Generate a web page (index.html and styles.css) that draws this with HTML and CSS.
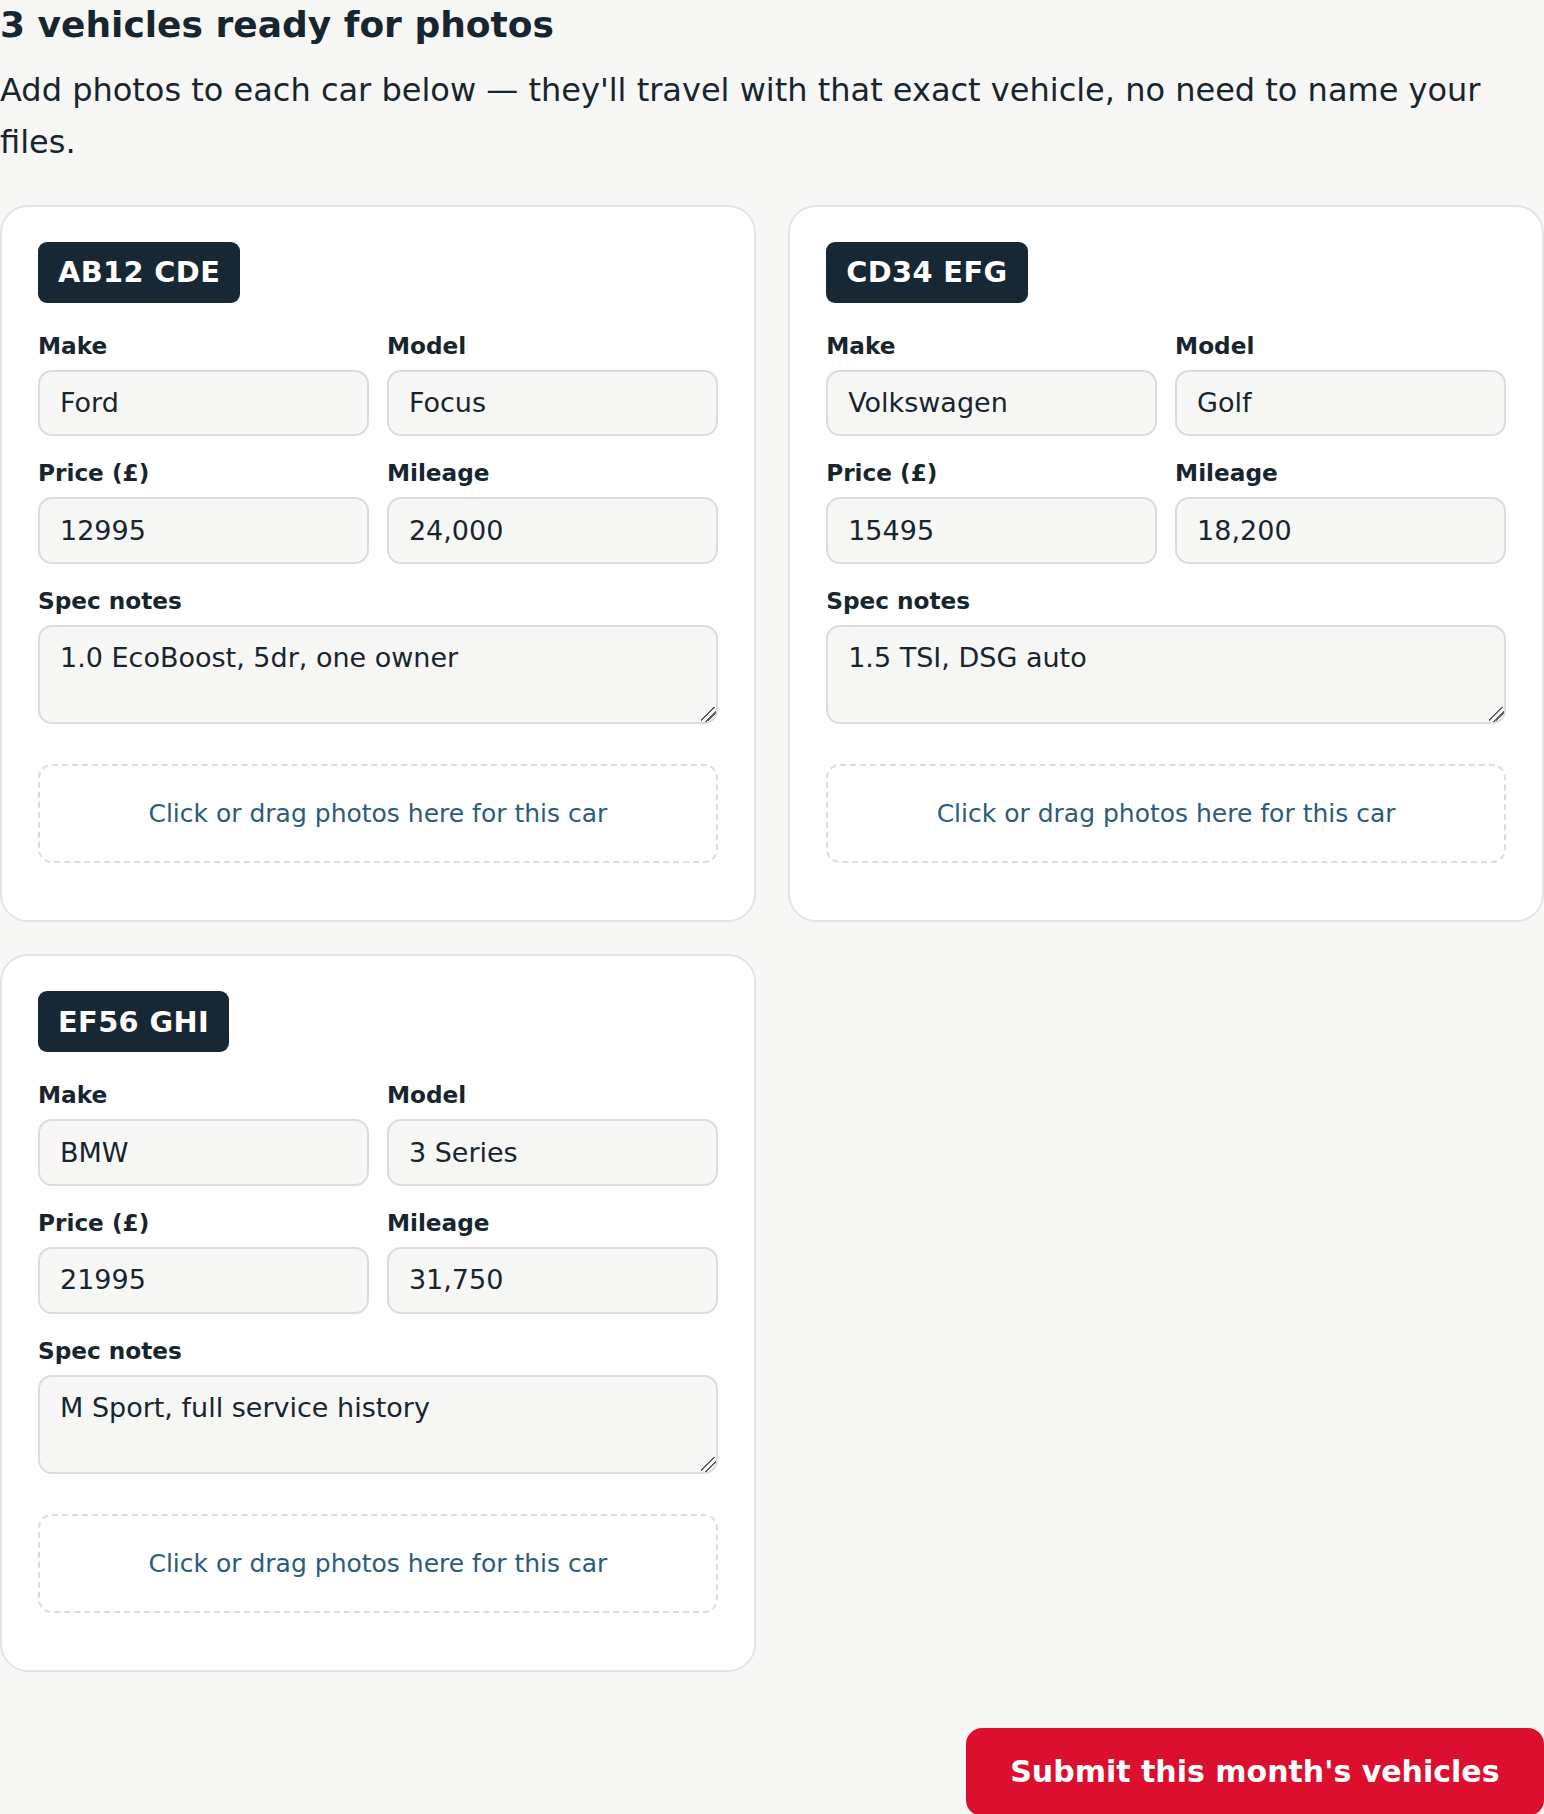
FILE: index.html
```html
<!DOCTYPE html>
<html lang="en">
<head>
<meta charset="utf-8">
<title>Vehicles ready for photos</title>
<link rel="stylesheet" href="styles.css">
</head>
<body>
<main class="page">
  <h1 class="title">3 vehicles ready for photos</h1>
  <p class="intro">Add photos to each car below — they'll travel with that exact vehicle, no need to name your files.</p>

  <div class="cards">
    <section class="card">
      <div class="plate">AB12 CDE</div>
      <div class="fields">
        <div class="field"><label class="label">Make</label><input class="input" type="text" value="Ford"></div>
        <div class="field"><label class="label">Model</label><input class="input" type="text" value="Focus"></div>
        <div class="field"><label class="label">Price (£)</label><input class="input" type="text" value="12995"></div>
        <div class="field"><label class="label">Mileage</label><input class="input" type="text" value="24,000"></div>
        <div class="field field-wide"><label class="label">Spec notes</label><textarea class="textarea">1.0 EcoBoost, 5dr, one owner</textarea></div>
      </div>
      <div class="dropzone">Click or drag photos here for this car</div>
    </section>

    <section class="card">
      <div class="plate">CD34 EFG</div>
      <div class="fields">
        <div class="field"><label class="label">Make</label><input class="input" type="text" value="Volkswagen"></div>
        <div class="field"><label class="label">Model</label><input class="input" type="text" value="Golf"></div>
        <div class="field"><label class="label">Price (£)</label><input class="input" type="text" value="15495"></div>
        <div class="field"><label class="label">Mileage</label><input class="input" type="text" value="18,200"></div>
        <div class="field field-wide"><label class="label">Spec notes</label><textarea class="textarea">1.5 TSI, DSG auto</textarea></div>
      </div>
      <div class="dropzone">Click or drag photos here for this car</div>
    </section>

    <section class="card">
      <div class="plate">EF56 GHI</div>
      <div class="fields">
        <div class="field"><label class="label">Make</label><input class="input" type="text" value="BMW"></div>
        <div class="field"><label class="label">Model</label><input class="input" type="text" value="3 Series"></div>
        <div class="field"><label class="label">Price (£)</label><input class="input" type="text" value="21995"></div>
        <div class="field"><label class="label">Mileage</label><input class="input" type="text" value="31,750"></div>
        <div class="field field-wide"><label class="label">Spec notes</label><textarea class="textarea">M Sport, full service history</textarea></div>
      </div>
      <div class="dropzone">Click or drag photos here for this car</div>
    </section>
  </div>

  <div class="actions">
    <button class="submit" type="button">Submit this month's vehicles</button>
  </div>
</main>
</body>
</html>
```

FILE: styles.css
```css
* {
  box-sizing: border-box;
}

html, body {
  margin: 0;
  padding: 0;
  background: #f7f7f5;
}

body {
  font-family: "DejaVu Sans", "Noto Sans", sans-serif;
  color: #17252f;
}

.page {
  width: 1544px;
}

.title {
  margin: 0 0 14.4px;
  font-size: 36px;
  font-weight: 700;
  line-height: 1.4;
  color: #17252f;
}

.intro {
  margin: 0 0 36.4px;
  font-size: 32px;
  line-height: 1.62;
  color: #17252f;
}

.cards {
  display: grid;
  grid-template-columns: 1fr 1fr;
  column-gap: 32.4px;
  row-gap: 32.4px;
}

.card {
  display: flex;
  flex-direction: column;
  align-items: stretch;
  background: #ffffff;
  border: 2px solid #e4e4e4;
  border-radius: 28px;
  padding: 35px 36px 57px;
}

.plate {
  align-self: flex-start;
  background: #172733;
  color: #ffffff;
  font-weight: 700;
  font-size: 28.8px;
  letter-spacing: 0.4px;
  line-height: normal;
  padding: 13.5px 20px;
  border-radius: 9px;
  margin-bottom: 29px;
}

.fields {
  display: grid;
  grid-template-columns: 1fr 1fr;
  column-gap: 18px;
  row-gap: 23px;
}

.field-wide {
  grid-column: 1 / -1;
}

.label {
  display: block;
  font-size: 23.2px;
  font-weight: 700;
  line-height: normal;
  margin-bottom: 11px;
  color: #17252f;
}

.input {
  display: block;
  width: 100%;
  height: 66.6px;
  margin: 0;
  padding: 0 18px 1px 20px;
  border: 2px solid #dcdcdc;
  border-radius: 14px;
  background: #f7f7f5;
  font-family: "DejaVu Sans", "Noto Sans", sans-serif;
  font-size: 27px;
  color: #17252f;
  outline: none;
}

.textarea {
  display: block;
  width: 100%;
  height: 99px;
  margin: 0;
  padding: 15px 18px 15px 20px;
  border: 2px solid #dcdcdc;
  border-radius: 14px;
  background: #f7f7f5;
  font-family: "DejaVu Sans", "Noto Sans", sans-serif;
  font-size: 27px;
  line-height: normal;
  color: #17252f;
  outline: none;
}

.textarea::-webkit-scrollbar {
  width: 17px;
  height: 17px;
}

.textarea::-webkit-resizer {
  background: linear-gradient(135deg,
    transparent 0 41%,
    #5c5c5c 41% 48%,
    transparent 48% 63%,
    #5c5c5c 63% 70%,
    transparent 70% 100%);
}

.dropzone {
  margin-top: 40px;
  border: 2px dashed #dddddd;
  border-radius: 14px;
  padding: 29px 28.8px;
  text-align: center;
  font-size: 25px;
  line-height: 37px;
  color: #2c5b7c;
  background: #ffffff;
}

.actions {
  display: flex;
  justify-content: flex-end;
  margin-top: 56px;
}

.submit {
  height: 88px;
  padding: 0 44.5px;
  border: none;
  border-radius: 16px;
  background: #dc102e;
  color: #ffffff;
  font-family: "DejaVu Sans", "Noto Sans", sans-serif;
  font-size: 30px;
  font-weight: 700;
  cursor: pointer;
}
```
